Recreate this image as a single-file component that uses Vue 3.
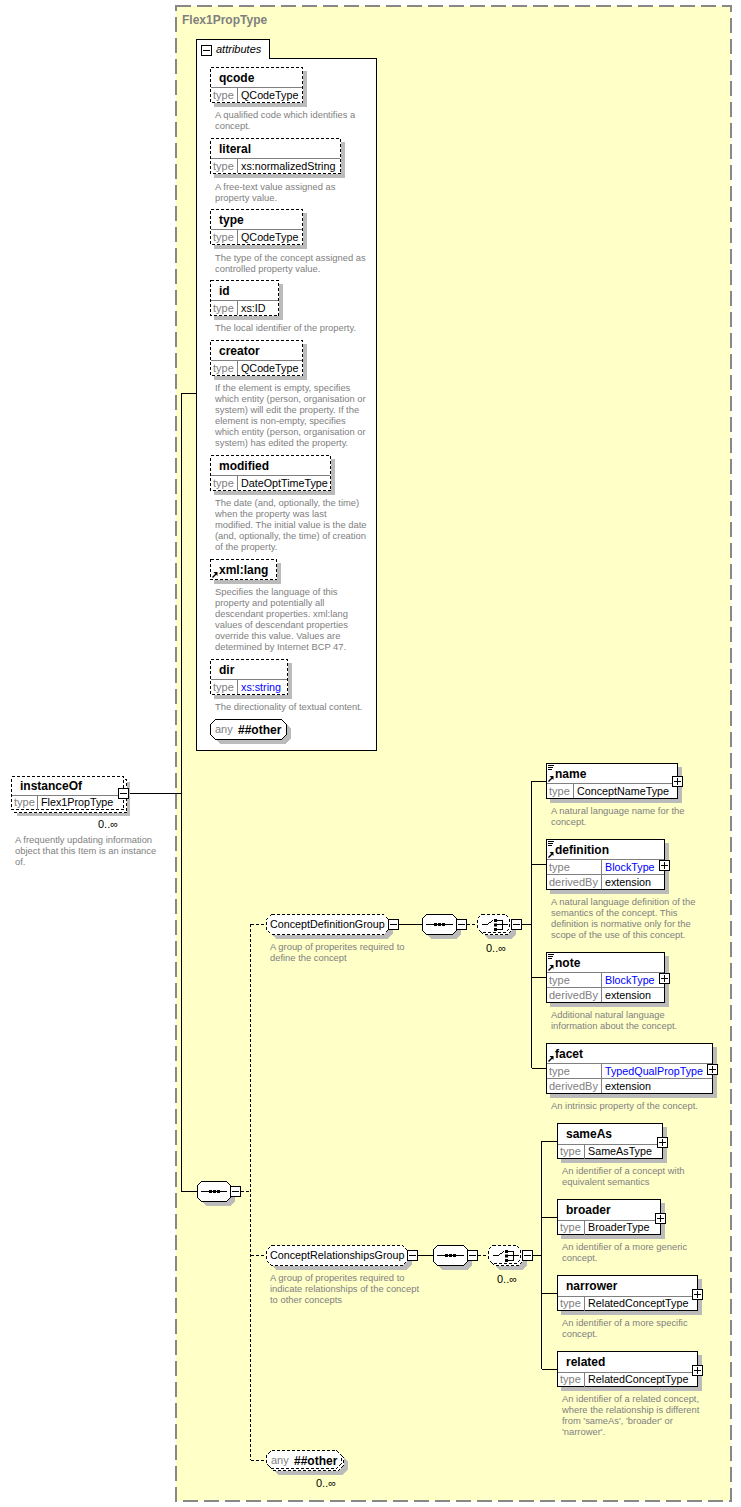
<script setup>
const rects = [
  { t: 'qcode', x1: 210, y1: 67, x2: 302, y2: 102, col: 237, rows: [['type', 'QCodeType']], dash: true },
  { t: 'literal', x1: 210, y1: 138, x2: 340, y2: 173, col: 237, rows: [['type', 'xs:normalizedString']], dash: true },
  { t: 'type', x1: 210, y1: 209, x2: 302, y2: 244, col: 237, rows: [['type', 'QCodeType']], dash: true },
  { t: 'id', x1: 210, y1: 280, x2: 278, y2: 315, col: 237, rows: [['type', 'xs:ID']], dash: true },
  { t: 'creator', x1: 210, y1: 340, x2: 302, y2: 375, col: 237, rows: [['type', 'QCodeType']], dash: true },
  { t: 'modified', x1: 210, y1: 455, x2: 330, y2: 490, col: 237, rows: [['type', 'DateOptTimeType']], dash: true },
  { t: 'xml:lang', x1: 210, y1: 559, x2: 276, y2: 579, rows: [], dash: true, arrow: true },
  { t: 'dir', x1: 210, y1: 659, x2: 287, y2: 694, col: 237, rows: [['type', 'xs:string', true]], dash: true },
  { t: 'instanceOf', x1: 11, y1: 776, x2: 123, y2: 809, col: 37, rows: [['type', 'Flex1PropType']], dash: true, multi: true, tall: true, titleDy: 14 },
  { t: 'name', x1: 546, y1: 763, x2: 677, y2: 798, col: 573, rows: [['type', 'ConceptNameType']], doc: true, arrow: true },
  { t: 'definition', x1: 546, y1: 839, x2: 664, y2: 889, col: 601, rows: [['type', 'BlockType', true], ['derivedBy', 'extension']], doc: true, arrow: true },
  { t: 'note', x1: 546, y1: 952, x2: 664, y2: 1002, col: 601, rows: [['type', 'BlockType', true], ['derivedBy', 'extension']], doc: true, arrow: true },
  { t: 'facet', x1: 546, y1: 1043, x2: 712, y2: 1093, col: 601, rows: [['type', 'TypedQualPropType', true], ['derivedBy', 'extension']], arrow: true },
  { t: 'sameAs', x1: 557, y1: 1123, x2: 662, y2: 1158, col: 584, rows: [['type', 'SameAsType']], tall: true },
  { t: 'broader', x1: 557, y1: 1199, x2: 660, y2: 1234, col: 584, rows: [['type', 'BroaderType']], tall: true },
  { t: 'narrower', x1: 557, y1: 1275, x2: 697, y2: 1310, col: 584, rows: [['type', 'RelatedConceptType']], tall: true },
  { t: 'related', x1: 557, y1: 1351, x2: 697, y2: 1386, col: 584, rows: [['type', 'RelatedConceptType']], tall: true },
].map((n) => {
  const count = n.rows.length
  return {
    ...n,
    rowsAt: n.rows.map((r, i) => {
      const top = n.y2 - (count - i) * 15
      return { label: r[0], value: r[1], blue: r[2], top: top + (n.tall ? 1 : 0), base: top + 12 }
    }),
    titleY: n.y1 + (n.titleDy ?? 15),
    titleX: n.x1 + 9,
  }
})

const occ = (x, y) => ({ x, y })
const occurs = [occ(98, 828), occ(486, 952), occ(497, 1283), occ(316, 1487)]

const oct = (x1, y1, x2, y2, b = 4) =>
  `${x1 + b + 0.5},${y1 + 0.5} ${x2 - b + 0.5},${y1 + 0.5} ${x2 + 0.5},${y1 + b + 0.5} ${x2 + 0.5},${y2 - b + 0.5} ${x2 - b + 0.5},${y2 + 0.5} ${x1 + b + 0.5},${y2 + 0.5} ${x1 + 0.5},${y2 - b + 0.5} ${x1 + 0.5},${y1 + b + 0.5}`

const groups = [
  { t: 'ConceptDefinitionGroup', x1: 266, y1: 914, x2: 388, y2: 934 },
  { t: 'ConceptRelationshipsGroup', x1: 266, y1: 1245, x2: 407, y2: 1265 },
]
const anys = [
  { x1: 210, y1: 719, x2: 286, y2: 739, multi: false },
  { x1: 266, y1: 1450, x2: 341, y2: 1468, multi: true },
]
const seqs = [
  { x1: 197, y1: 1181, x2: 230, y2: 1201 },
  { x1: 422, y1: 914, x2: 456, y2: 934 },
  { x1: 433, y1: 1245, x2: 467, y2: 1265 },
]
const choices = [
  { x1: 477, y1: 914, x2: 509, y2: 932 },
  { x1: 488, y1: 1245, x2: 520, y2: 1263 },
]

const boxes = [
  { x: 118, y: 788 }, { x: 230, y: 1186 }, { x: 388, y: 919 }, { x: 456, y: 919 }, { x: 511, y: 919 },
  { x: 407, y: 1250 }, { x: 467, y: 1250 }, { x: 522, y: 1250 },
  { x: 201, y: 45 },
  { x: 672, y: 776, plus: true }, { x: 659, y: 860, plus: true }, { x: 659, y: 973, plus: true }, { x: 707, y: 1064, plus: true },
  { x: 657, y: 1137, plus: true }, { x: 655, y: 1213, plus: true }, { x: 692, y: 1289, plus: true }, { x: 692, y: 1365, plus: true },
]

const solid = [
  'M128 793.5H181.5', 'M181.5 393V1191.5H197', 'M181.5 393.5H196',
  'M399 924.5H422', 'M522 924.5H531.5', 'M531.5 781V1068',
  'M531.5 781.5H546', 'M531.5 864.5H546', 'M531.5 977.5H546', 'M531.5 1068.5H546',
  'M418 1255.5H433', 'M533 1255.5H541.5', 'M541.5 1141V1369',
  'M541.5 1141.5H557', 'M541.5 1217.5H557', 'M541.5 1293.5H557', 'M541.5 1369.5H557',
]
const dashed = [
  'M241 1191.5H250', 'M250.5 924V1460', 'M250.5 924.5H266', 'M250.5 1255.5H266', 'M250.5 1460.5H266',
  'M467 924.5H477', 'M478 1255.5H488',
]

const notes = [
  { x: 215, y: 118, l: ['A qualified code which identifies a', 'concept.'] },
  { x: 215, y: 190, l: ['A free-text value assigned as', 'property value.'] },
  { x: 215, y: 261, l: ['The type of the concept assigned as', 'controlled property value.'] },
  { x: 215, y: 331, l: ['The local identifier of the property.'] },
  { x: 215, y: 391, l: ['If the element is empty, specifies', 'which entity (person, organisation or', 'system) will edit the property. If the', 'element is non-empty, specifies', 'which entity (person, organisation or', 'system) has edited the property.'] },
  { x: 215, y: 506, l: ['The date (and, optionally, the time)', 'when the property was last', 'modified. The initial value is the date', '(and, optionally, the time) of creation', 'of the property.'] },
  { x: 215, y: 595, l: ['Specifies the language of this', 'property and potentially all', 'descendant properties. xml:lang', 'values of descendant properties', 'override this value. Values are', 'determined by Internet BCP 47.'] },
  { x: 215, y: 710, l: ['The directionality of textual content.'] },
  { x: 15, y: 843, l: ['A frequently updating information', 'object that this Item is an instance', 'of.'] },
  { x: 270, y: 950, l: ['A group of properites required to', 'define the concept'] },
  { x: 270, y: 1281, l: ['A group of properites required to', 'indicate relationships of the concept', 'to other concepts'] },
  { x: 551, y: 814, l: ['A natural language name for the', 'concept.'] },
  { x: 551, y: 905, l: ['A natural language definition of the', 'semantics of the concept. This', 'definition is normative only for the', 'scope of the use of this concept.'] },
  { x: 551, y: 1018, l: ['Additional natural language', 'information about the concept.'] },
  { x: 551, y: 1109, l: ['An intrinsic property of the concept.'] },
  { x: 562, y: 1174, l: ['An identifier of a concept with', 'equivalent semantics'] },
  { x: 562, y: 1250, l: ['An identifier of a more generic', 'concept.'] },
  { x: 562, y: 1326, l: ['An identifier of a more specific', 'concept.'] },
  { x: 562, y: 1402, l: ['An identifier of a related concept,', 'where the relationship is different', "from 'sameAs', 'broader' or", "'narrower'."] },
]
</script>

<template>
  <svg class="canvas" width="741" height="1507" viewBox="0 0 741 1507">
    <rect class="page" x="0" y="0" width="741" height="1507" />
    <rect class="complex" x="176" y="6" width="555" height="1495" />
    <text class="complex-title" x="182" y="24">Flex1PropType</text>

    <!-- attributes panel -->
    <path class="panel" d="M196.5 58.5V39.5H269.5V58.5H376.5V750.5H196.5Z" />
    <text class="panel-title" x="216" y="53">attributes</text>

    <path v-for="d in solid" :key="d" class="wire" :d="d" />
    <path v-for="d in dashed" :key="d" class="wire dash" :d="d" />

    <!-- element and attribute nodes -->
    <g v-for="n in rects" :key="n.t">
      <rect class="shadow" :x="n.x1 + (n.multi ? 6 : 4)" :y="n.y1 + (n.multi ? 6 : 4)" :width="n.x2 - n.x1 + 1" :height="n.y2 - n.y1 + 1" />
      <rect v-if="n.multi" class="node dash" :x="n.x1 + 3.5" :y="n.y1 + 3.5" :width="n.x2 - n.x1" :height="n.y2 - n.y1" />
      <rect class="node" :class="{ dash: n.dash }" :x="n.x1 + 0.5" :y="n.y1 + 0.5" :width="n.x2 - n.x1" :height="n.y2 - n.y1" />
      <template v-for="r in n.rowsAt" :key="r.label">
        <path class="rule" :d="`M${n.x1 + 1} ${r.top + 0.5}H${n.x2}`" />
        <path class="rule" :d="`M${n.col + 0.5} ${r.top}V${r.top + 15}`" />
        <text class="label" :x="n.x1 + 3" :y="r.base">{{ r.label }}</text>
        <text class="value" :class="{ blue: r.blue }" :x="n.col + 4" :y="r.base">{{ r.value }}</text>
      </template>
      <text class="title" :x="n.titleX" :y="n.titleY">{{ n.t }}</text>
      <path v-if="n.doc" class="wire" :d="`M${n.x1 + 2} ${n.y1 + 2.5}H${n.x1 + 8}M${n.x1 + 2} ${n.y1 + 4.5}H${n.x1 + 7}M${n.x1 + 2} ${n.y1 + 6.5}H${n.x1 + 6}`" />
      <g v-if="n.arrow" :transform="`translate(${n.x1 + 2} ${n.y1 + (n.rows.length ? 13 : n.y2 - n.y1 - 7)})`">
        <path class="arrow" d="M0.5 5.5L4 2" />
        <path class="arrow-head" d="M1.5 0H5.5V4Z" />
      </g>
    </g>

    <!-- model groups -->
    <g v-for="g in groups" :key="g.t">
      <polygon class="shadow" :points="oct(g.x1 + 4, g.y1 + 4, g.x2 + 4, g.y2 + 4, 5)" />
      <polygon class="node dash" :points="oct(g.x1, g.y1, g.x2, g.y2, 5)" />
      <text class="value" :x="g.x1 + 4" :y="g.y1 + 14">{{ g.t }}</text>
    </g>

    <!-- wildcards -->
    <g v-for="a in anys" :key="a.x1">
      <polygon class="shadow" :points="oct(a.x1 + (a.multi ? 6 : 4), a.y1 + (a.multi ? 6 : 4), a.x2 + (a.multi ? 6 : 4), a.y2 + (a.multi ? 6 : 4), 5)" />
      <polygon v-if="a.multi" class="node dash" :points="oct(a.x1 + 2, a.y1 + 2, a.x2 + 2, a.y2 + 2, 5)" />
      <polygon class="node" :class="{ dash: a.multi }" :points="oct(a.x1, a.y1, a.x2, a.y2, 5)" />
      <text class="label" :x="a.x1 + 5" :y="a.y1 + 14">any</text>
      <text class="title" :x="a.x1 + 28" :y="a.y1 + 15">##other</text>
    </g>

    <!-- sequence compositors -->
    <g v-for="s in seqs" :key="s.x1">
      <polygon class="shadow" :points="oct(s.x1 + 4, s.y1 + 4, s.x2 + 4, s.y2 + 4)" />
      <polygon class="node" :points="oct(s.x1, s.y1, s.x2, s.y2)" />
      <path class="wire" :d="`M${s.x1 + 4} ${s.y1 + 10.5}H${s.x2 - 3}`" />
      <rect v-for="i in 3" :key="i" class="ink" :x="s.x1 + 12 + (i - 1) * 4" :y="s.y1 + 9" width="3" height="3" />
    </g>

    <!-- choice compositors -->
    <g v-for="c in choices" :key="c.x1">
      <polygon class="shadow" :points="oct(c.x1 + 6, c.y1 + 6, c.x2 + 6, c.y2 + 6)" />
      <polygon class="node dash" :points="oct(c.x1 + 2, c.y1 + 2, c.x2 + 2, c.y2 + 2)" />
      <polygon class="node dash" :points="oct(c.x1, c.y1, c.x2, c.y2)" />
      <path class="wire" :d="`M${c.x1 + 5} ${c.y1 + 10.5}H${c.x1 + 10}L${c.x1 + 16} ${c.y1 + 6.5}M${c.x1 + 19} ${c.y1 + 6.5}H${c.x1 + 25.5}V${c.y1 + 15.5}H${c.x1 + 19}M${c.x1 + 19} ${c.y1 + 10.5}H${c.x1 + 31}`" />
      <rect v-for="i in 3" :key="i" class="ink" :x="c.x1 + 17" :y="c.y1 + 5 + (i - 1) * 4.5" width="3" height="3" />
    </g>

    <!-- expand and collapse toggles -->
    <g v-for="b in boxes" :key="`${b.x}-${b.y}`">
      <rect class="toggle" :x="b.x + 0.5" :y="b.y + 0.5" width="10" height="10" />
      <path class="wire" :d="`M${b.x + 2} ${b.y + 5.5}H${b.x + 9}`" />
      <path v-if="b.plus" class="wire" :d="`M${b.x + 5.5} ${b.y + 2}V${b.y + 9}`" />
    </g>

    <text v-for="o in occurs" :key="o.x" class="occurs" :x="o.x" :y="o.y">0..∞</text>

    <template v-for="n in notes" :key="n.y">
      <text v-for="(line, i) in n.l" :key="i" class="note" :x="n.x" :y="n.y + i * 11">{{ line }}</text>
    </template>
  </svg>
</template>

<style>
html, body { margin: 0; background: #fff; }
</style>

<style scoped>
.canvas { display: block; font-family: "Liberation Sans", Arial, sans-serif; }
.page { fill: #fff; }
.complex { fill: #ffffc8; stroke: #888; stroke-width: 2; stroke-dasharray: 15 6; shape-rendering: crispEdges; }
.complex-title { fill: #808080; font-size: 12px; font-weight: 700; }
.panel { fill: #fff; stroke: #000; shape-rendering: crispEdges; }
.panel-title { font-size: 11px; font-style: italic; fill: #000; }
.wire { fill: none; stroke: #000; stroke-width: 1; shape-rendering: crispEdges; }
.wire.dash { stroke-dasharray: 3 2; }
.shadow { fill: #bbb; stroke: none; shape-rendering: crispEdges; }
.node { fill: #fff; stroke: #000; stroke-width: 1; shape-rendering: crispEdges; }
.node.dash { stroke-dasharray: 3 2; }
.rule { stroke: #808080; stroke-width: 1; fill: none; shape-rendering: crispEdges; }
.label { fill: #808080; font-size: 11px; }
.value { fill: #000; font-size: 10.75px; }
.value.blue { fill: #0000ff; }
.title { fill: #000; font-size: 12px; font-weight: 700; }
.arrow { stroke: #000; stroke-width: 1.5; fill: none; }
.arrow-head { fill: #000; }
.ink { fill: #000; }
.toggle { fill: #fff; stroke: #000; stroke-width: 1; shape-rendering: crispEdges; }
.occurs { fill: #000; font-size: 11px; }
.note { fill: #808080; font-size: 9.4px; }
</style>
